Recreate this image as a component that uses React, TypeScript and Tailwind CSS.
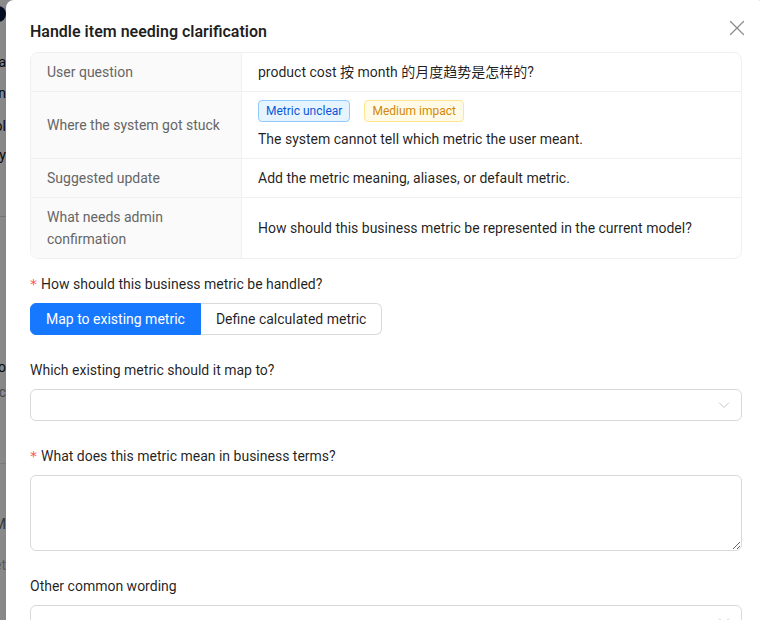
import React from "react";

const font = { fontFamily: '"Segoe UI", Roboto, "Noto Sans CJK SC", sans-serif' };

function Chevron() {
  return (
    <svg width="12" height="12" viewBox="0 0 12 12" fill="none" className="text-[#c4c4c4]">
      <path d="M1.5 4 L6 8.5 L10.5 4" stroke="currentColor" strokeWidth="1" strokeLinecap="round" strokeLinejoin="round" />
    </svg>
  );
}

function Label({ children, required }: { children: React.ReactNode; required?: boolean }) {
  return (
    <div className="flex h-[22px] items-center pb-0 text-[14px] leading-[22px] text-[rgba(0,0,0,0.88)]">
      {required && <span className="mr-[4px] text-[14px] text-[#ff4d4f]" style={{ fontFamily: "SimSun, 'DejaVu Sans', sans-serif" }}>*</span>}
      <span>{children}</span>
    </div>
  );
}

function Select() {
  return (
    <div className="flex h-[32px] items-center justify-end rounded-[6px] border border-[#d9d9d9] bg-white pr-[11px]">
      <Chevron />
    </div>
  );
}

export default function App() {
  const rows: { label: React.ReactNode; content: React.ReactNode }[] = [
    { label: "User question", content: "product cost 按 month 的月度趋势是怎样的?" },
    {
      label: "Where the system got stuck",
      content: (
        <div className="flex flex-col gap-[6px]">
          <div className="flex gap-[14px]">
            <span className="inline-flex h-[22px] items-center rounded-[4px] border border-[#91caff] bg-[#e6f4ff] px-[7px] text-[12px] text-[#0958d9]">
              Metric unclear
            </span>
            <span className="inline-flex h-[22px] items-center rounded-[4px] border border-[#ffe58f] bg-[#fffbe6] px-[7px] text-[12px] text-[#d48806]">
              Medium impact
            </span>
          </div>
          <div>The system cannot tell which metric the user meant.</div>
        </div>
      ),
    },
    { label: "Suggested update", content: "Add the metric meaning, aliases, or default metric." },
    {
      label: "What needs admin confirmation",
      content: "How should this business metric be represented in the current model?",
    },
  ];

  return (
    <div className="relative h-[620px] w-[760px] overflow-hidden bg-white" style={font}>
      {/* background page */}
      <div className="absolute inset-y-0 left-0 flex w-[6px] flex-col items-end overflow-hidden text-[14px] text-[#111]">
        <div className="mt-[6px] h-[16px] w-[16px] shrink-0 rounded-full bg-[#0b1a40]" />
        <div className="mt-[30px] whitespace-nowrap">Data</div>
        <div className="mt-[10px] whitespace-nowrap">Main</div>
        <div className="mt-[12px] whitespace-nowrap">Tool</div>
        <div className="mt-[8px] whitespace-nowrap">Ready</div>
        <div className="mt-[50px] h-px w-full shrink-0 bg-[#d9d9d9]" />
        <div className="mt-[140px] whitespace-nowrap">Amo</div>
        <div className="mt-[4px] whitespace-nowrap text-[#888]">Doc</div>
        <div className="mt-[60px] h-px w-full shrink-0 bg-[#e5e5e5]" />
        <div className="mt-[50px] whitespace-nowrap text-[#666]">ITEM</div>
        <div className="mt-[20px] whitespace-nowrap text-[#aaa]">Let</div>
      </div>
      <div className="absolute inset-0 bg-black/45" />

      {/* modal */}
      <div className="absolute left-[6px] top-0 w-[760px] rounded-[8px] bg-white px-6 pt-5 shadow-[0_6px_16px_rgba(0,0,0,0.08)]">
        <button className="absolute right-[18px] top-[17px] flex h-[22px] w-[22px] items-center justify-center text-[rgba(0,0,0,0.45)]">
          <svg width="16" height="16" viewBox="0 0 16 16" fill="none">
            <path d="M1.5 1.5 L14.5 14.5 M14.5 1.5 L1.5 14.5" stroke="currentColor" strokeWidth="1.3" strokeLinecap="round" />
          </svg>
        </button>
        <div className="mb-2 text-[16px] font-semibold leading-[24px] text-[rgba(0,0,0,0.88)]">
          Handle item needing clarification
        </div>

        <div className="overflow-hidden rounded-[8px] border border-[#f0f0f0] text-[14px] leading-[22px]">
          {rows.map((r, i) => (
            <div key={i} className={`flex ${i > 0 ? "border-t border-[#f0f0f0]" : ""}`}>
              <div className="flex w-[211px] shrink-0 items-center border-r border-[#f0f0f0] bg-[#fafafa] px-4 py-2 text-[#666]">
                {r.label}
              </div>
              <div className="flex flex-1 items-center px-4 py-2 text-[rgba(0,0,0,0.88)]">{r.content}</div>
            </div>
          ))}
        </div>

        <div className="mt-[14px]">
          <Label required>How should this business metric be handled?</Label>
          <div className="mt-2 flex">
            <div className="flex h-[32px] items-center rounded-l-[6px] border border-[#1677ff] bg-[#1677ff] px-[15px] text-[14px] text-white">
              Map to existing metric
            </div>
            <div className="flex h-[32px] items-center rounded-r-[6px] border border-l-0 border-[#d9d9d9] bg-white px-[15px] text-[14px] text-[rgba(0,0,0,0.88)]">
              Define calculated metric
            </div>
          </div>
        </div>

        <div className="mt-6">
          <Label>Which existing metric should it map to?</Label>
          <div className="mt-2">
            <Select />
          </div>
        </div>

        <div className="mt-6">
          <Label required>What does this metric mean in business terms?</Label>
          <div className="mt-2">
            <textarea
              rows={3}
              className="block h-[76px] w-full resize-y rounded-[6px] border border-[#d9d9d9] bg-white px-[11px] py-[4px] text-[14px] leading-[22px] outline-none"
            />
          </div>
        </div>

        <div className="mt-6">
          <Label>Other common wording</Label>
          <div className="mt-2">
            <Select />
          </div>
        </div>
        <div className="h-[60px]" />
      </div>
    </div>
  );
}
